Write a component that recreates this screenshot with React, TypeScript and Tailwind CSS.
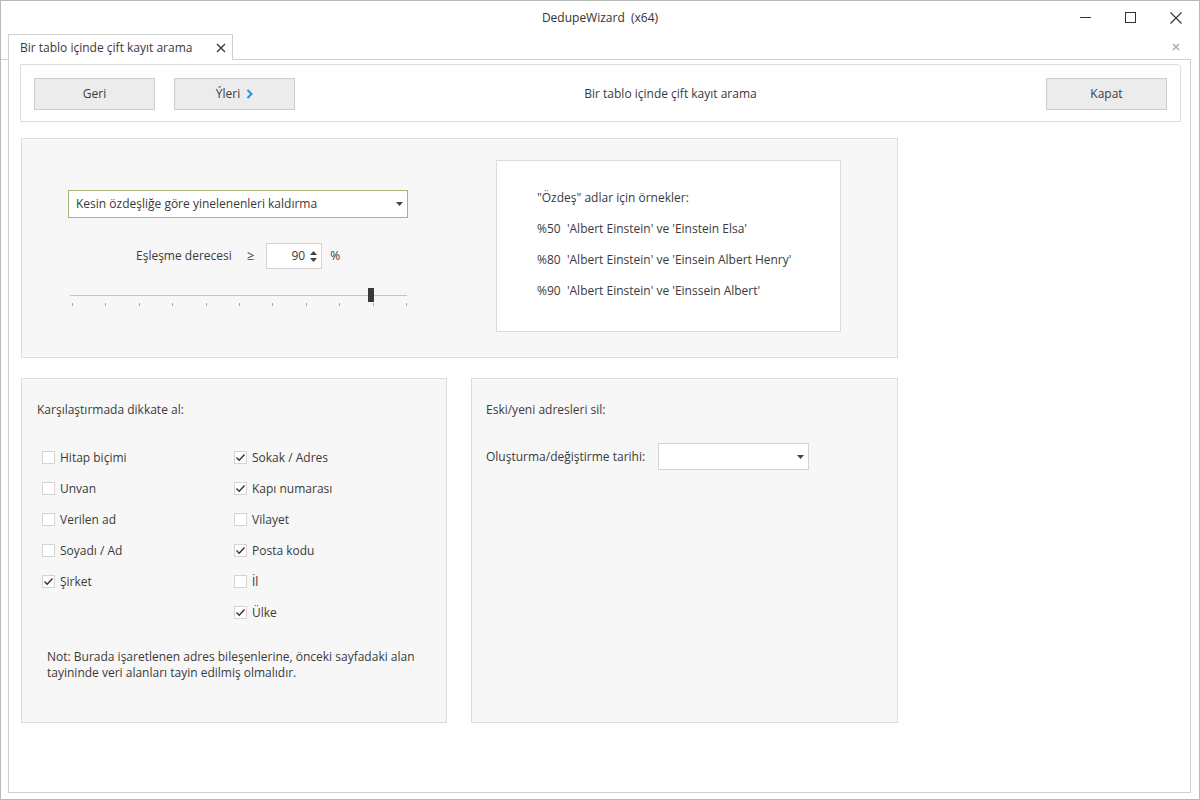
import React from 'react'

const font = { fontFamily: '"Open Sans", "Noto Sans", sans-serif' }

const Check = ({ checked, label }: { checked?: boolean; label: string }) => (
  <div className="flex items-center h-[31px]">
    <div className="w-[13px] h-[13px] border border-[#d4d4d4] bg-white flex items-center justify-center">
      {checked && (
        <svg width="11" height="11" viewBox="0 0 11 11">
          <path d="M1.5 5.5 L4.2 8.2 L9.5 2.5" stroke="#333" strokeWidth="1.4" fill="none" />
        </svg>
      )}
    </div>
    <span className="ml-[5px]">{label}</span>
  </div>
)

const Caret = () => (
  <svg width="7" height="4" viewBox="0 0 7 4">
    <path d="M0 0 L7 0 L3.5 4 Z" fill="#444" />
  </svg>
)

export default function App() {
  const ticks = Array.from({ length: 11 }, (_, i) => i)
  return (
    <div
      className="w-[1200px] h-[800px] bg-white border border-[#b9b9b9] flex flex-col text-[12px] text-[#3a3a3a]"
      style={font}
    >
      {/* title bar */}
      <div className="h-[33px] grid grid-cols-[1fr_auto_1fr] items-center">
        <div />
        <div className="text-[#333]">DedupeWizard&nbsp;&nbsp;(x64)</div>
        <div className="flex justify-end h-full">
          <div className="w-[45px] flex items-center justify-center">
            <div className="w-[11px] h-px bg-[#333]" />
          </div>
          <div className="w-[45px] flex items-center justify-center">
            <div className="w-[11px] h-[11px] border border-[#333]" />
          </div>
          <div className="w-[46px] flex items-center justify-center">
            <svg width="12" height="12" viewBox="0 0 12 12">
              <path d="M0.5 0.5 L11.5 11.5 M11.5 0.5 L0.5 11.5" stroke="#333" strokeWidth="1.1" />
            </svg>
          </div>
        </div>
      </div>

      {/* tab strip */}
      <div className="h-[26px] flex">
        <div className="w-[7px] border-b border-[#cfcfcf]" />
        <div className="w-[225px] border border-b-0 border-[#cfcfcf] bg-white flex items-center pl-[11px] pr-[6px]">
          <span className="flex-1">Bir tablo içinde çift kayıt arama</span>
          <svg width="10" height="10" viewBox="0 0 10 10">
            <path d="M1 1 L9 9 M9 1 L1 9" stroke="#333" strokeWidth="1.3" />
          </svg>
        </div>
        <div className="flex-1 border-b border-[#cfcfcf] flex items-center justify-end pr-[11px]">
          <svg width="8" height="8" viewBox="0 0 8 8">
            <path d="M1 1 L7 7 M7 1 L1 7" stroke="#a8a8a8" strokeWidth="1.4" />
          </svg>
        </div>
        <div className="w-[8px]" />
      </div>

      {/* content */}
      <div className="ml-[7px] w-[1183px] h-[733px] border border-t-0 border-[#cfcfcf] flex flex-col">
        {/* toolbar */}
        <div className="mt-[4px] ml-[11px] w-[1161px] h-[58px] border border-[#dcdcdc] rounded-tr-[4px] bg-white flex items-center px-[13px] pt-[1px]">
          <button className="w-[121px] h-[32px] bg-[#ececec] border border-[#cdcdcd]">Geri</button>
          <button className="ml-[19px] w-[121px] h-[32px] bg-[#ececec] border border-[#cdcdcd] flex items-center justify-center gap-[6px]">
            <span>Ýleri</span>
            <svg width="7" height="10" viewBox="0 0 7 10">
              <path d="M1.5 1 L5.5 5 L1.5 9" stroke="#2d8fd6" strokeWidth="2" fill="none" />
            </svg>
          </button>
          <div className="flex-1 text-center">Bir tablo içinde çift kayıt arama</div>
          <button className="w-[121px] h-[32px] bg-[#ececec] border border-[#cdcdcd]">Kapat</button>
        </div>

        {/* match panel */}
        <div className="mt-[16px] ml-[12px] w-[877px] h-[220px] border border-[#dcdcdc] bg-[#f7f7f7] flex">
          <div className="pl-[46px] pt-[51px] w-[420px]">
            <div className="w-[340px] h-[28px] border border-[#a4b47a] bg-white flex items-center pl-[7px] pr-[4px]">
              <span className="flex-1">Kesin özdeşliğe göre yinelenenleri kaldırma</span>
              <Caret />
            </div>
            <div className="w-[340px] mt-[25px] pl-[68px] flex items-center">
              <span>Eşleşme derecesi</span>
              <span className="ml-[15px] text-[13px]">≥</span>
              <div className="ml-[12px] w-[56px] h-[26px] border border-[#d4d4d4] bg-white flex items-center justify-end pr-[4px]">
                <span className="mr-[5px]">90</span>
                <div className="flex flex-col gap-[3px]">
                  <svg width="7" height="4" viewBox="0 0 7 4"><path d="M0 4 L7 4 L3.5 0 Z" fill="#444" /></svg>
                  <svg width="7" height="4" viewBox="0 0 7 4"><path d="M0 0 L7 0 L3.5 4 Z" fill="#444" /></svg>
                </div>
              </div>
              <span className="ml-[8px]">%</span>
            </div>
            <div className="relative mt-[19px] ml-[2px] w-[337px] h-[18px]">
              <div className="absolute left-0 right-0 top-[7px] h-px bg-[#c4c4c4]" />
              <div className="absolute left-[298px] top-0 w-[6px] h-[14px] bg-[#3a3a3a]" />
              {ticks.map((i) => (
                <div
                  key={i}
                  className="absolute top-[15px] w-px h-[3px] bg-[#a8a8a8]"
                  style={{ left: 2 + i * 33.4 }}
                />
              ))}
            </div>
          </div>
          <div className="mt-[21px] ml-[54px] w-[345px] h-[172px] border border-[#dcdcdc] bg-white pl-[40px] pt-[28px] flex flex-col gap-[13px]">
            <div>"Özdeş" adlar için örnekler:</div>
            <div>%50&nbsp;&nbsp;'Albert Einstein' ve 'Einstein Elsa'</div>
            <div>%80&nbsp;&nbsp;'Albert Einstein' ve 'Einsein Albert Henry'</div>
            <div>%90&nbsp;&nbsp;'Albert Einstein' ve 'Einssein Albert'</div>
          </div>
        </div>

        {/* lower panels */}
        <div className="mt-[20px] ml-[12px] flex gap-[24px]">
          <div className="w-[426px] h-[345px] border border-[#dcdcdc] bg-[#f7f7f7] pl-[15px] pt-[22px]">
            <div>Karşılaştırmada dikkate al:</div>
            <div className="mt-[23px] ml-[5px] grid grid-cols-[192px_1fr]">
              <div className="flex flex-col">
                <Check label="Hitap biçimi" />
                <Check label="Unvan" />
                <Check label="Verilen ad" />
                <Check label="Soyadı / Ad" />
                <Check checked label="Şirket" />
              </div>
              <div className="flex flex-col">
                <Check checked label="Sokak / Adres" />
                <Check checked label="Kapı numarası" />
                <Check label="Vilayet" />
                <Check checked label="Posta kodu" />
                <Check label="İl" />
                <Check checked label="Ülke" />
              </div>
            </div>
            <div className="mt-[21px] ml-[10px] leading-[16px]">
              Not: Burada işaretlenen adres bileşenlerine, önceki sayfadaki alan
              <br />
              tayininde veri alanları tayin edilmiş olmalıdır.
            </div>
          </div>
          <div className="w-[427px] h-[345px] border border-[#dcdcdc] bg-[#f7f7f7] pl-[14px] pt-[22px]">
            <div>Eski/yeni adresleri sil:</div>
            <div className="mt-[24px] flex items-center">
              <span>Oluşturma/değiştirme tarihi:</span>
              <div className="ml-[13px] w-[151px] h-[27px] border border-[#d4d4d4] bg-white flex items-center justify-end pr-[4px]">
                <Caret />
              </div>
            </div>
          </div>
        </div>
      </div>
    </div>
  )
}
